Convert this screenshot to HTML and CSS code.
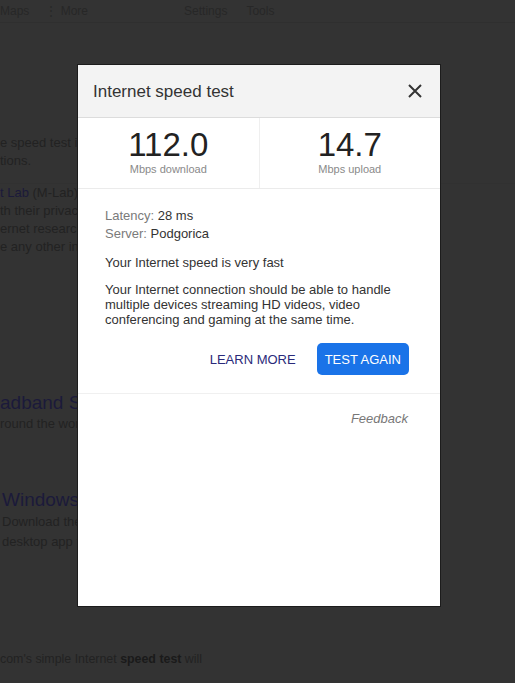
FILE: index.html
```html
<!DOCTYPE html>
<html lang="en">
<head>
  <meta charset="UTF-8">
  <title>Internet speed test</title>
  <link rel="stylesheet" href="styles.css">
</head>
<body>

  <div class="page">
    <div class="nav">
      <span class="nav-item">Maps</span>
      <span class="nav-item nav-more">&#8942; More</span>
      <span class="nav-item nav-settings">Settings</span>
      <span class="nav-item">Tools</span>
    </div>

    <div class="result first">
      <p>e speed test i</p>
      <p>tions.</p>
    </div>

    <div class="result second">
      <p><a href="#">t Lab</a> (M-Lab)</p>
      <p>th their privac</p>
      <p>ernet research</p>
      <p>e any other inf</p>
    </div>

    <div class="result third">
      <h3><a href="#">adband Sp</a></h3>
      <p>round the wor</p>
    </div>

    <div class="result fourth">
      <h3><a href="#">Windows</a></h3>
      <p>Download the</p>
      <p>desktop app f</p>
    </div>

    <div class="result fifth">
      <p>com's simple Internet <b>speed test</b> will</p>
    </div>
  </div>

  <div class="modal">
    <div class="modal-header">
      <h2>Internet speed test</h2>
      <button class="close" aria-label="Close">
        <svg width="14" height="14" viewBox="0 0 14 14">
          <path d="M1 1 L13 13 M13 1 L1 13" stroke="#333" stroke-width="2" fill="none"/>
        </svg>
      </button>
    </div>

    <div class="stats">
      <div class="stat">
        <div class="value">112.0</div>
        <div class="unit">Mbps download</div>
      </div>
      <div class="stat">
        <div class="value">14.7</div>
        <div class="unit">Mbps upload</div>
      </div>
    </div>

    <div class="details">
      <div class="meta"><span class="label">Latency:</span> 28 ms</div>
      <div class="meta"><span class="label">Server:</span> Podgorica</div>
      <p class="verdict">Your Internet speed is very fast</p>
      <p class="desc">Your Internet connection should be able to handle multiple devices streaming HD videos, video conferencing and gaming at the same time.</p>
      <div class="actions">
        <button class="learn">LEARN MORE</button>
        <button class="again">TEST AGAIN</button>
      </div>
    </div>

    <div class="feedback">Feedback</div>
  </div>

</body>
</html>
```

FILE: styles.css
```css
body {
  margin: 0;
  background: #333;
  font-family: "Liberation Sans", Arial, sans-serif;
  color: #1f1f1f;
  height: 683px;
  overflow: hidden;
}
p {
  margin: 0;
}
a {
  color: #1b1a3a;
  text-decoration: none;
}
.page {
  font-size: 13px;
  color: #222;
}
.nav {
  display: flex;
  height: 22px;
  align-items: center;
  border-bottom: 1px solid #2f2f2f;
}
.nav-item {
  color: #272727;
  font-size: 12px;
}
.nav-more {
  margin-left: 16px;
}
.nav-settings {
  margin-left: 96px;
  margin-right: 19px;
}
.result p {
  line-height: 18px;
}
.first {
  margin-top: 111px;
}
.second {
  margin-top: 13px;
  border-top: 1px solid #313131;
}
.third {
  margin-top: 135px;
}
.third h3, .fourth h3 {
  margin: 0;
  font-size: 19px;
  font-weight: normal;
  line-height: 24px;
}
.fourth {
  margin-top: 55px;
  padding-left: 2px;
}
.fourth p {
  line-height: 20px;
}
.fifth {
  margin-top: 98px;
  font-size: 12.4px;
}
.fifth b {
  color: #1a1a1a;
}
.modal {
  position: absolute;
  left: 77px;
  top: 64px;
  width: 362px;
  height: 541px;
  background: #fff;
  border: 1px solid #1c1c1c;
  display: flex;
  flex-direction: column;
}
.modal-header {
  display: flex;
  align-items: center;
  justify-content: space-between;
  height: 52px;
  padding: 0 18px 0 15px;
  background: #f3f3f3;
  border-bottom: 1px solid #dcdcdc;
}
.modal-header h2 {
  margin: 0;
  font-size: 17px;
  font-weight: normal;
  color: #333;
  padding-top: 1px;
}
.close {
  border: none;
  background: none;
  padding: 0;
  display: flex;
}
.stats {
  display: flex;
  height: 70px;
  border-bottom: 1px solid #ebebeb;
}
.stat {
  flex: 1;
  text-align: center;
  padding-top: 9px;
}
.stat + .stat {
  border-left: 1px solid #efefef;
}
.value {
  font-size: 33px;
  line-height: 36px;
  color: #222;
}
.unit {
  font-size: 11px;
  color: #8a8a8a;
  line-height: 12px;
}
.details {
  padding: 18px 31px 18px 27px;
  font-size: 13px;
  color: #333;
  border-bottom: 1px solid #f0f0f0;
}
.meta {
  line-height: 18px;
}
.label {
  color: #7a7a7a;
}
.verdict {
  margin-top: 11px;
  line-height: 18px;
}
.desc {
  margin-top: 10px;
  line-height: 15px;
}
.actions {
  display: flex;
  justify-content: flex-end;
  align-items: center;
  margin-top: 16px;
  gap: 21px;
}
.actions button {
  font-family: "Liberation Sans", Arial, sans-serif;
  font-size: 13px;
  border: none;
  height: 32px;
  padding: 0 8px;
}
.actions .learn {
  background: none;
  color: #2a2a7a;
  padding: 0;
}
.again {
  background: #1a73e8;
  color: #fff;
  border-radius: 5px;
}
.feedback {
  text-align: right;
  padding: 17px 32px 0 0;
  font-size: 13px;
  font-style: italic;
  color: #777;
}
```
